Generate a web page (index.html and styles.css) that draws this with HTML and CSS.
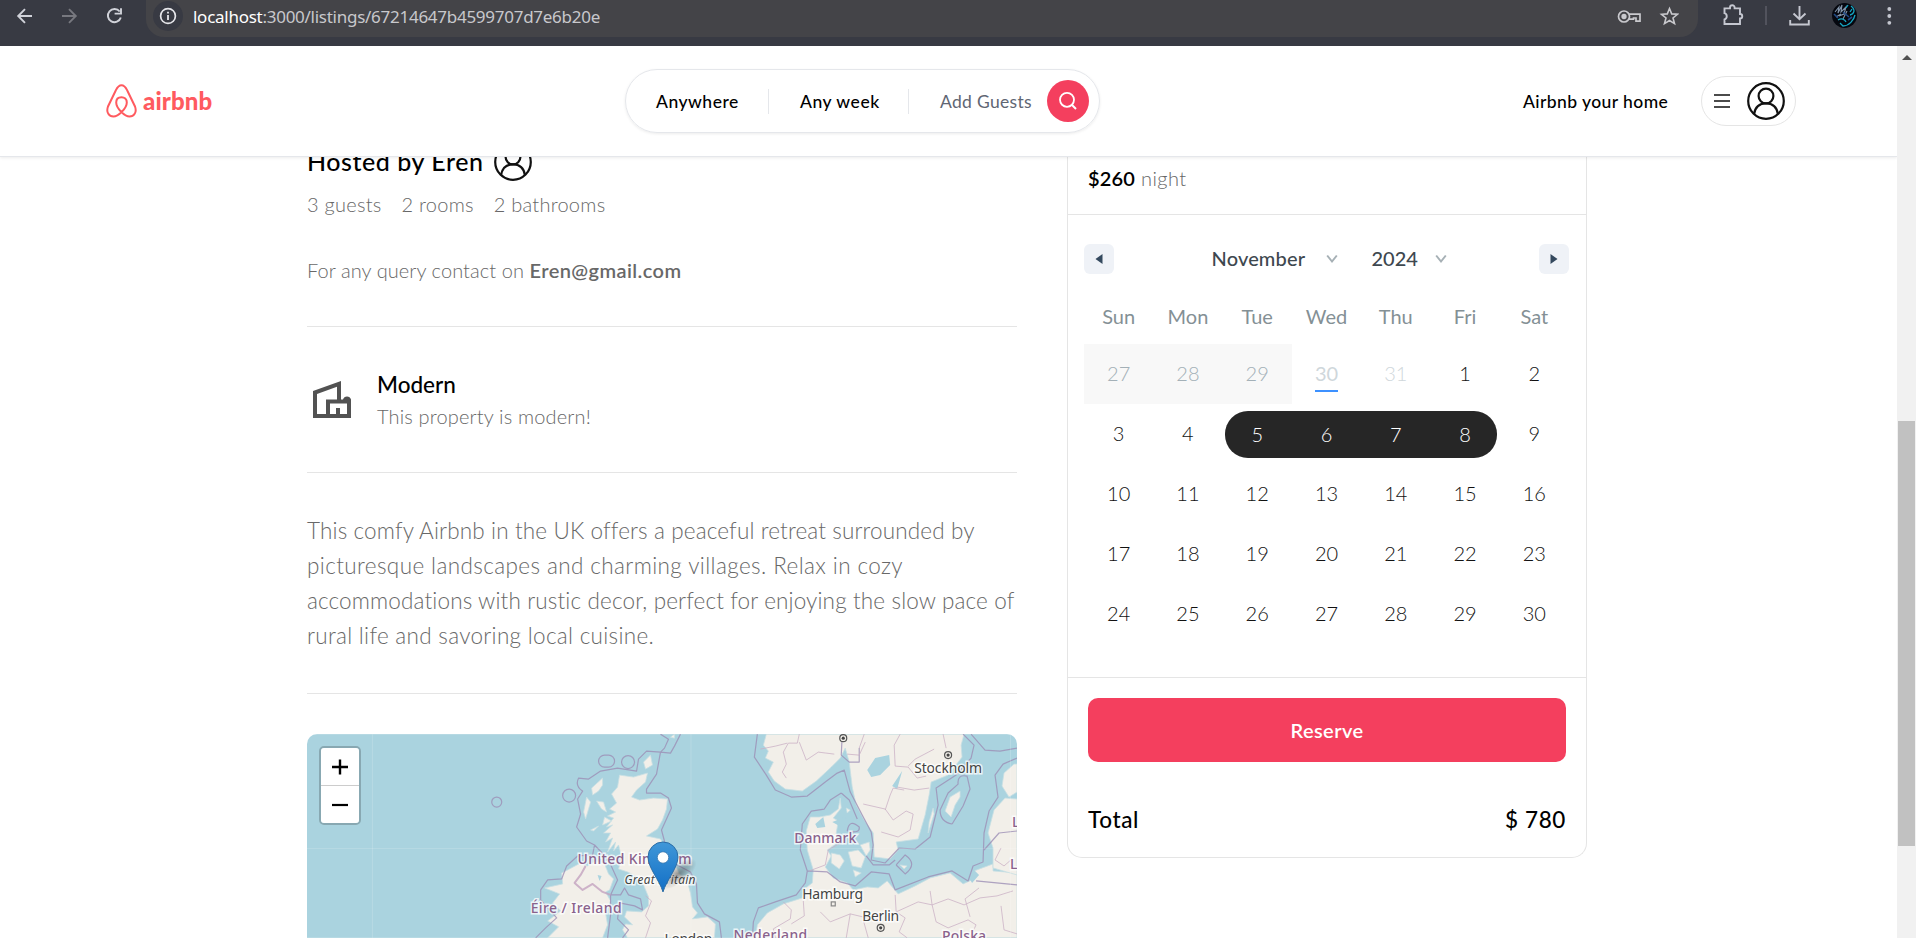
FILE: index.html
```html
<!DOCTYPE html>
<html lang="en">
<head>
<meta charset="utf-8">
<title>Airbnb</title>
<link rel="stylesheet" href="styles.css">
</head>
<body>
<svg class="defs" width="0" height="0">
  <symbol id="avatar" viewBox="0 0 38 38"><g fill="none" stroke="#111" stroke-width="2.2"><circle cx="19" cy="19" r="17.8"/><circle cx="19" cy="14" r="7.4"/><path d="M7 32.2C8.200 25 13 21.400 19 21.400S29.800 25 31 32.200"/></g></symbol>
  <symbol id="chev" viewBox="0 0 12 10"><path d="M1.200 1.500L6 7.500L10.800 1.500" fill="none" stroke="#a6b0b5" stroke-width="2"/></symbol>
</svg>
<div class="browser">
  <svg class="nav-icons" width="146" height="46" viewBox="0 0 146 46" fill="none" stroke="#d0d2d9" stroke-width="1.900">
    <path d="M32 16H18.500M25 9.200L18.200 16L25 22.800"/>
    <path d="M62 16H75.500M69 9.200L75.800 16L69 22.800" stroke="#77787f"/>
    <path d="M119.700 11.500A6.600 6.600 0 1 0 120.800 17.500M121 8.200V13.600H114.600"/>
  </svg>
  <div class="omnibox">
    <span class="info"><svg width="18" height="18" viewBox="0 0 18 18"><circle cx="9" cy="9" r="7.400" fill="none" stroke="#e6e6ea" stroke-width="1.700"/><path d="M9 8v5M9 4.800v1.800" stroke="#e6e6ea" stroke-width="1.800"/></svg></span>
    <span class="url"><b>localhost</b>:3000/listings/67214647b4599707d7e6b20e</span>
    <svg class="omni-icons" width="64" height="22" viewBox="1616 5 64 22" fill="none" stroke="#c9c9cd" stroke-width="1.700">
      <circle cx="1625" cy="16.500" r="5.500"/><circle cx="1625" cy="16.500" r="1.800" fill="#c9c9cd"/><path d="M1630 14.200H1641V21.200H1637V18H1634.500V19.200H1629.500"/>
      <path d="M1670.500 8.500L1672.700 13.900L1678.500 14.300L1674 18L1675.500 23.600L1670.500 20.500L1665.500 23.600L1667 18L1662.500 14.300L1668.300 13.900Z" stroke-width="1.600"/>
    </svg>
  </div>
  <svg class="tool-icons" width="200" height="46" viewBox="1716 0 200 46" fill="none" stroke="#c5c7d0" stroke-width="1.900">
    <path d="M1724.500 8.400H1730V7.500A2.300 2.300 0 0 1 1734.600 7.500V8.400H1740V14A2.200 2.200 0 0 1 1740 18.500V24H1724.500V19.500C1727.500 18.500 1727.500 14 1724.500 13.200Z"/>
    <path d="M1766 6V25" stroke="#5b5d66" stroke-width="1.500"/>
    <path d="M1799.500 6V19M1793.500 13.500L1799.500 19.300L1805.500 13.500M1790.200 20V24.500H1808.800V20"/>
    <circle cx="1844.500" cy="15.500" r="12.500" fill="#05070f" stroke="none"/>
    <path d="M1835 12L1839 7L1838 13L1842 5L1841 12L1846 7L1844 14L1839 16M1843 19L1847 11M1836 17L1841 14" stroke="#8294aa" stroke-width="1.100"/>
    <path d="M1851 6C1856 10 1854 14 1850 15M1855 15C1854 20 1849 26 1843 26L1840 23M1852 9L1850 12M1838 20C1841 18 1845 19 1846 22M1848 5L1846 8" stroke="#16a6c3" stroke-width="1.300"/>
    <path d="M1843 12L1849 17M1838 18L1834 14M1848 20L1852 17" stroke="#214a86" stroke-width="1.600"/>
    <g fill="#c5c7d0" stroke="none"><circle cx="1889.300" cy="9" r="1.900"/><circle cx="1889.300" cy="16" r="1.900"/><circle cx="1889.300" cy="22.800" r="1.900"/></g>
  </svg>
</div>
<div class="window">
  <div class="page">
    <header class="header">
      <div class="logo">
        <svg width="31" height="34" viewBox="0 0 31 34"><path d="M15.500 1.200C12 1.200 11 4 9.500 7L2 22.500C-.2 28.500 3.200 32.600 7.500 32.600C12 32.600 20.800 24.500 20.800 18.500C20.800 15 18.500 13.200 15.500 13.200C12.500 13.200 10.200 15 10.200 18.500C10.200 24.500 19 32.600 23.500 32.600C27.800 32.600 31.200 28.500 29 22.500L21.500 7C20 4 19 1.200 15.500 1.200Z" fill="none" stroke="#ff5a5f" stroke-width="2"/></svg>
        <span class="logo-text">airbnb</span>
      </div>
      <div class="search">
        <div class="seg seg-1">Anywhere</div>
        <div class="seg seg-2">Any week</div>
        <div class="seg seg-3">Add Guests</div>
        <div class="search-btn"><svg width="20" height="20" viewBox="0 0 20 20"><circle cx="9" cy="8.800" r="7" fill="none" stroke="#fff" stroke-width="1.800"/><path d="M13.800 13.800L18 18" stroke="#fff" stroke-width="2"/></svg></div>
      </div>
      <div class="home">Airbnb your home</div>
      <div class="user">
        <svg width="16" height="16" viewBox="0 0 16 16"><path d="M0 2H16M0 8H16M0 14H16" stroke="#111" stroke-width="1.700"/></svg>
        <svg width="38" height="38"><use href="#avatar"/></svg>
      </div>
    </header>
    <main class="main">
      <section class="details">
        <div class="host"><span>Hosted by Eren</span><svg width="38" height="38"><use href="#avatar"/></svg></div>
        <div class="facts"><span>3 guests</span><span>2 rooms</span><span>2 bathrooms</span></div>
        <div class="contact">For any query contact on <b>Eren@gmail.com</b></div>
        <hr class="rule">
        <div class="category">
          <svg width="50" height="50" viewBox="0 0 50 50" fill="#525252"><path fill-rule="evenodd" d="M6 16L34 6V24.500H36A4.200 4.200 0 0 1 44 24.500V43H6ZM10 19V39H19V24.500H30V11.800ZM23 28.500V39H29V33H33V39H40V28.500Z"/></svg>
          <div>
            <div class="cat-name">Modern</div>
            <div class="cat-desc">This property is modern!</div>
          </div>
        </div>
        <hr class="rule">
        <p class="description">This comfy Airbnb in the UK offers a peaceful retreat surrounded by<br><span class="loose">picturesque landscapes and charming villages. Relax in cozy</span><br>accommodations with rustic decor, perfect for enjoying the slow pace of<br><span class="loose">rural life and savoring local cuisine.</span></p>
        <hr class="rule">
        <div class="map">
          <svg class="map-art" width="711" height="204" viewBox="306 734 711 204">
            <defs><linearGradient id="pin" x1="0" y1="0" x2="0" y2="1"><stop offset="0" stop-color="#4097d8"/><stop offset="1" stop-color="#126fc6"/></linearGradient>
            <radialGradient id="shade"><stop offset="0" stop-color="#333" stop-opacity=".5"/><stop offset="1" stop-color="#333" stop-opacity="0"/></radialGradient></defs>
            <rect x="306" y="734" width="711" height="204" fill="#aad3df"/>
            <g class="land">
              <path d="M619 775L633 777L647 773L645 782L636 790L631 797L639 800L653 798L667 799L666 809L662 820L657 829L646 836L660 839L666 850L673 861L679 874L687 882L690 893L692 907L697 913L692 919L707 917L715 924L714 938H627L622 930L625 924L632 925L624 917L626 911L641 912L648 906L648 897L643 885L635 876L627 872L618 869L621 857L618 845L613 851L615 842L607 852L612 838L605 842L610 833L603 833L612 825L606 827L613 818L607 816L615 812L609 809L616 803L611 794L617 787Z"/>
              <path d="M591 788L602 778L602 785L598 791L592 795ZM596 801L603 802L606 812L601 809ZM586 797L590 802L585 819L583 812ZM643 762L650 755L652 765L645 769ZM604 817L611 821L602 825ZM590 830L598 826L593 831ZM670 737L674 734V738Z"/>
              <path d="M567 870L580 863L587 866L595 861L604 864L608 874L613 879L609 890L605 892L610 901L605 913L607 925L602 938H547L558 927L547 921L560 911L552 903L559 894L544 888L562 884L561 873Z"/>
              <path d="M766 734L763 745L768 751L765 758L773 762L768 772L774 781L785 789L802 791L816 781L831 767L840 758L845 748L849 762L852 787L856 805L864 820L873 833L874 857L890 859L898 850L896 842L918 839L925 815L929 795L931 782L948 775L962 757L961 745L964 734Z"/>
              <path d="M840 798L838 809L830 815L819 817L810 817L806 831L807 850L813 870L812 883L804 889L802 898L783 904L767 913L757 925L755 938H1017V873L993 871L993 864L974 871L974 879L963 884L950 873L930 878L915 886L898 894L887 881L878 888L867 887L853 890L847 883L833 878L825 867L831 856L827 850L838 842L836 833L838 821L833 818L841 808Z"/>
              <path d="M831 853L840 855L844 861L839 869L831 863ZM848 852L858 850L865 857L861 868L852 866ZM860 845L869 842L870 850L866 856ZM853 870L861 873L855 877ZM945 811L950 797L960 791L960 797L955 805L951 817ZM1002 786L1004 773L1014 764H1017V792L1009 797ZM900 865L907 866L904 869ZM929 822L933 808L934 814L928 833ZM846 808L850 810L847 813Z"/>
              <path d="M1017 799L1005 798L994 810L988 833L993 848L993 868L1017 875Z"/>
            </g>
            <path class="water" d="M867 770L875 758L889 755L890 765L880 775L871 777ZM892 786L902 771L897 789ZM597 875L601 876L599 881ZM832 822L845 817L848 822L841 827ZM815 824L823 817L825 827L817 828ZM968 876L973 869L979 875L972 883Z"/>
            <g class="border">
              <path d="M660 734L668 739L664 748L660 752L646 751L638 759L636 771L617 768L600 771L588 779L578 778Q574 786 582 791L577 799L580 814L576 827L586 841L594 845L592 855L577 856L566 866L561 879L547 880L540 890L540 900L556 918L545 928L535 938M680 734L674 746L670 753L660 752M660 752L656 774L646 789L646 793L660 793L668 798L671 808L661 830L665 845L675 864L690 872L696 884L697 903L704 914L719 922L721 938M594 845L608 860L617 880L610 895L620 895L624 888L628 895L640 899L642 910L634 906L619 903L617 919L628 930L622 938M610 895L610 915L607 938"/>
              <path class="irish" d="M585 866L580 875L574 883L582 890L592 884L602 892L610 895"/>
              <rect x="598" y="755" width="16" height="12" rx="6"/><circle cx="627.500" cy="762" r="6.500"/><circle cx="568.500" cy="795.500" r="6.500"/><circle cx="496" cy="802" r="5"/>
              <path d="M757 734L754 757L766 775L775 790L791 797L807 796L825 782L837 773L844 770L850 792L862 815L871 832L873 845L871 860L885 863L899 848L915 849L930 837L938 805L936 788L956 775L971 758L974 745L963 734M971 734L985 750L1000 751L1017 748M841 793L830 800L824 809L811 811L802 824L800 850L807 871L805 883L796 895L775 902L758 908L753 922L752 938M807 871L827 872L840 882L855 886L871 872L889 874L895 890L928 877L952 871L968 881L973 866L983 862L984 833L989 811L998 797L995 775L1003 764L1017 758M866 856L873 865L889 865L895 860M841 793L849 800L857 819M952 824Q940 822 940 810L948 793L958 784Q957 774 967 776L970 789L963 806L952 824M984 850L999 833L1017 831M976 881L1017 885M847 831Q849 818 859 827Q860 834 847 831M896 865L905 855Q918 864 905 874L896 865M842 734L841 755L849 762L859 762L859 748"/>
            </g>
            <g class="region">
              <path d="M786 778L782 772L786 764L783 752L788 743L797 743L799 734M799 742L806 760L818 752L834 754M760 749L775 746L787 743M859 748L864 734M900 734L894 745L895 766L908 767L917 778L926 776M897 787L914 790L929 788M885 810L890 795L893 788L904 790M863 804L885 809L893 820L906 811L913 814L910 830L898 837L881 832M934 749L915 759L908 766M946 748L943 734M865 742L859 755L847 754M809 871L825 865L828 850L840 843M783 902L791 910L790 919L773 929L775 938M803 901L804 916L791 924M895 895L896 912L905 918L899 932L907 938M896 912L918 902L932 905L930 891M932 905L948 899L964 905L980 898L997 896L1013 891M932 905L936 922L948 928L968 920L976 925L970 938M970 917L965 899L979 888M820 912L830 922L850 914L875 920L889 910M850 914L846 938M868 938L863 920M1001 906L1004 930L1017 934M645 896L651 901L645 916L650 923L645 938M1001 848L995 860L1004 866L1012 859"/>
            </g>
            <path d="M306 848.500H1017M371.500 734V938M690.500 734V938M1010.500 734V938" stroke="#fff" stroke-opacity=".16"/>
            <g class="country">
              <text x="577" y="864" textLength="114">United Kingdom</text><text x="530" y="913" textLength="91">Éire / Ireland</text><text x="794" y="843" textLength="62">Danmark</text><text x="733" y="940" textLength="74">Nederland</text><text x="942" y="941" textLength="44">Polska</text><text x="1012" y="827">Latvija</text><text x="1010" y="869">Lietuva</text>
            </g>
            <g class="city">
              <text x="914" y="773" textLength="68">Stockholm</text><text x="802" y="899" textLength="61">Hamburg</text><text x="862" y="921" textLength="37">Berlin</text><text x="664" y="944" textLength="48">London</text><text class="gb" x="624" y="884" textLength="71">Great Britain</text>
            </g>
            <g fill="#f2efe9" stroke="#555" stroke-width="1.200"><circle cx="843" cy="738" r="3.500"/><circle cx="948" cy="755" r="3.500"/><circle cx="880.500" cy="928" r="3.500"/><rect x="831" y="902" width="4" height="4" stroke="#888"/></g>
            <g fill="#444"><circle cx="843" cy="738" r="1.600"/><circle cx="948" cy="755" r="1.600"/><circle cx="880.500" cy="928" r="1.600"/></g>
            <ellipse cx="678" cy="874" rx="22" ry="9" fill="url(#shade)" transform="rotate(-38 678 874)"/>
            <path d="M662.500 892C659 880 647.500 868 647.500 857A15 15 0 0 1 677.500 857C677.500 868 666 880 662.500 892Z" fill="url(#pin)" stroke="#2b6ca6"/>
            <circle cx="662.500" cy="857.500" r="5.700" fill="#fff" stroke="#2b6ca6" stroke-width=".7"/>
          </svg>
          <div class="zoom"><div class="zoom-btn"><svg width="16" height="16" viewBox="0 0 16 16"><path d="M0 8H16M8 .5V15.500" stroke="#000" stroke-width="2.400"/></svg></div><div class="zoom-btn"><svg width="16" height="16" viewBox="0 0 16 16"><path d="M0 8H16" stroke="#000" stroke-width="2.200"/></svg></div></div>
        </div>
      </section>
      <aside class="card">
        <div class="price"><b>$260</b><span>night</span></div>
        <div class="calendar">
          <div class="cal-head">
            <div class="arrow"><svg width="8" height="10" viewBox="0 0 8 10"><path d="M7.500 0V10L.5 5Z" fill="#34495e"/></svg></div>
            <div class="pickers">
              <span class="month">November</span><svg width="12" height="10"><use href="#chev"/></svg>
              <span class="year">2024</span><svg width="12" height="10"><use href="#chev"/></svg>
            </div>
            <div class="arrow"><svg width="8" height="10" viewBox="0 0 8 10"><path d="M.5 0V10L7.500 5Z" fill="#34495e"/></svg></div>
          </div>
          <div class="week names"><span>Sun</span><span>Mon</span><span>Tue</span><span>Wed</span><span>Thu</span><span>Fri</span><span>Sat</span></div>
          <div class="week"><span class="past">27</span><span class="past">28</span><span class="past">29</span><span class="dim today">30</span><span class="dim">31</span><span>1</span><span>2</span></div>
          <div class="week"><span>3</span><span>4</span><span class="sel first">5</span><span class="sel">6</span><span class="sel">7</span><span class="sel last">8</span><span>9</span></div>
          <div class="week"><span>10</span><span>11</span><span>12</span><span>13</span><span>14</span><span>15</span><span>16</span></div>
          <div class="week"><span>17</span><span>18</span><span>19</span><span>20</span><span>21</span><span>22</span><span>23</span></div>
          <div class="week"><span>24</span><span>25</span><span>26</span><span>27</span><span>28</span><span>29</span><span>30</span></div>
        </div>
        <div class="reserve-box"><div class="reserve">Reserve</div></div>
        <div class="total"><span>Total</span><span>$ 780</span></div>
      </aside>
    </main>
  </div>
  <div class="scrollbar"><div class="up"></div><div class="thumb"></div></div>
</div>
</body>
</html>
```
FILE: styles.css
```css
* { box-sizing: border-box; }
body { margin: 0; width: 1916px; height: 938px; overflow: hidden; background: #fff; color: #000; font-family: Lato, "Open Sans", sans-serif; display: flex; flex-direction: column; }
b { font-weight: 600; }
svg { flex: none; }
.defs { position: absolute; }
.browser { height: 46px; flex: none; background: #383a43; display: flex; }
.omnibox { width: 1552px; height: 37px; background: #444448; border-radius: 0 0 18px 18px; display: flex; align-items: center; padding: 0 19px 5px 7px; }
.info { width: 30px; height: 30px; border-radius: 50%; background: #383a43; display: flex; align-items: center; justify-content: center; }
.url { font: 17px "Noto Sans", sans-serif; letter-spacing: -.266px; color: #c8c8cc; margin-left: 10px; white-space: nowrap; }
.url b { font-weight: 400; color: #fff; }
.omni-icons { margin-left: auto; }
.tool-icons { margin-left: auto; }
.window { flex: 1; display: flex; min-height: 0; }
.page { width: 1897px; overflow: hidden; }
.header { position: relative; z-index: 2; height: 111px; background: #fff; border-bottom: 1px solid #e5e7eb; box-shadow: 0 1px 3px rgba(0,0,0,.08); display: flex; align-items: center; padding-left: 106px; font-size: 17.5px; font-weight: 500; letter-spacing: .42px; }
.logo { width: 107px; margin-right: 412px; display: flex; align-items: center; flex: none; }
.logo-text { margin-left: 6px; color: #ff5a5f; font-size: 24px; font-weight: 900; line-height: 28px; letter-spacing: .1px; padding-bottom: 1px; }
.search { width: 475px; height: 64px; flex: none; border: 1px solid #e5e7eb; border-radius: 32px; box-shadow: 0 1px 3px rgba(0,0,0,.08); display: flex; align-items: center; white-space: nowrap; }
.seg { height: 25px; line-height: 25px; padding-left: 30px; }
.seg-1 { width: 143px; border-right: 1px solid #e5e7eb; letter-spacing: .5px; }
.seg-2 { width: 140px; padding-left: 31px; border-right: 1px solid #e5e7eb; letter-spacing: .55px; }
.seg-3 { width: 138px; padding-left: 31px; color: #5f6673; font-weight: 400; letter-spacing: .32px; }
.search-btn { width: 42px; height: 42px; border-radius: 50%; background: #f43f5e; display: flex; align-items: center; justify-content: center; }
.home { margin-left: 423px; width: 178px; white-space: nowrap; }
.user { width: 95px; height: 50px; border: 1px solid #e5e5e5; border-radius: 25px; display: flex; align-items: center; padding: 0 10px 0 12px; justify-content: space-between; }
.main { margin-top: -14px; padding-left: 307px; display: flex; gap: 50px; align-items: flex-start; }
.details { width: 710px; color: #686868; font-size: 20px; font-weight: 300; }
.host { height: 38px; display: flex; align-items: center; gap: 10px; color: #000; font-size: 25px; font-weight: 500; letter-spacing: .55px; }
.host span { padding-bottom: 3px; }
.facts { margin-top: 9px; line-height: 29px; padding-bottom: 1px; display: flex; gap: 20px; letter-spacing: .25px; }
.contact { margin-top: 35px; line-height: 30px; letter-spacing: .072px; }
.contact b { letter-spacing: .42px; }
.rule { border: 0; height: 1px; background: #e5e5e5; margin: 40px 0; }
.contact + .rule { margin-top: 41px; }
.category { display: flex; align-items: center; gap: 20px; height: 65px; }
.cat-name { line-height: 35px; font-size: 22.5px; font-weight: 500; color: #000; }
.cat-desc { line-height: 28px; padding-bottom: 2px; letter-spacing: .163px; }
.description { margin: 0; font-size: 22.5px; line-height: 35px; white-space: nowrap; letter-spacing: .14px; }
.loose { letter-spacing: .3px; }
.description .loose:first-of-type { letter-spacing: .394px; }
.map { position: relative; height: 204px; border-radius: 10px 10px 0 0; overflow: hidden; }
.map-art { display: block; width: 710px; }
.land path { fill: #f2efe9; stroke: #c9e0e3; stroke-width: .8; }
.water { fill: #aad3df; }
.border * { fill: none; stroke: #9c8fb5; stroke-width: 1.200; stroke-opacity: .8; stroke-linejoin: round; }
.border .irish { stroke: #c3a3bf; stroke-width: 2; }
.region path { fill: none; stroke: #c9aec4; stroke-width: 1; stroke-opacity: .75; }
.country text, .city text { font-family: "Noto Sans", sans-serif; font-size: 14px; font-weight: 400; paint-order: stroke; stroke: rgba(255,255,255,.75); stroke-width: 3px; }
.country text { fill: #8a628c; font-weight: 500; }
.city text { fill: #444; }
.city .gb { font-style: italic; font-size: 12px; }
.zoom { position: absolute; left: 12px; top: 12px; width: 42px; height: 79px; border: 2px solid rgba(0,0,0,.2); border-radius: 5px; background-clip: padding-box; }
.zoom-btn { height: 37px; background: #fff; display: flex; align-items: center; justify-content: center; border-radius: 0 0 3px 3px; }
.zoom-btn:first-child { height: 38px; border-bottom: 1px solid #ccc; border-radius: 3px 3px 0 0; }
.card { width: 520px; height: 715px; border: 1px solid #e5e5e5; border-top: 0; border-radius: 0 0 15px 15px; font-size: 20px; }
.price { height: 72px; border-bottom: 1px solid #e5e5e5; display: flex; align-items: center; gap: 6px; padding: 0 0 2px 20px; color: #666; font-weight: 300; letter-spacing: .45px; }
.price b { color: #000; letter-spacing: .15px; }
.calendar { height: 463px; border-bottom: 1px solid #e5e5e5; padding: 29px 17px 0 16px; }
.cal-head { display: flex; justify-content: space-between; align-items: center; height: 30px; }
.arrow { width: 30px; height: 30px; border-radius: 6px; background: #eff2f7; display: flex; align-items: center; justify-content: center; }
.pickers { display: flex; align-items: center; font-weight: 500; color: #3e484f; padding-left: 5px; }
.month { width: 114px; padding-bottom: 2px; letter-spacing: .15px; }
.year { width: 63px; margin-left: 34px; padding-bottom: 2px; }
.week { display: grid; grid-template-columns: repeat(7, 1fr); height: 60px; font-weight: 300; color: #111; }
.week span { display: flex; align-items: center; justify-content: center; padding-bottom: 2px; }
.names { height: 56px; margin-top: 14px; color: #849095; font-weight: 400; }
.names span { padding-bottom: 0; }
.week .past { background: #f8f8f8; color: #a3b0b7; }
.week .dim { color: #cfd7db; }
.today { position: relative; font-weight: 400; }
.today::after { content: ""; position: absolute; left: 23px; bottom: 12px; width: 23px; height: 2px; background: #3d91ff; }
.week .sel { background: #262626; color: #fff; margin: 7px 0 6px; }
.week .first { border-radius: 23px 0 0 23px; margin-left: 2px; padding-right: 2px; }
.week .last { border-radius: 0 23px 23px 0; margin-right: 3px; padding-left: 3px; }
.reserve-box { padding: 20px 20px 0; }
.reserve { height: 64px; border-radius: 10px; background: #f43f5e; color: #fff; font-weight: 600; letter-spacing: .4px; display: flex; align-items: center; justify-content: center; padding-bottom: 1px; }
.total { height: 95px; padding: 20px 20px 0 20px; display: flex; align-items: center; justify-content: space-between; font-size: 22.5px; font-weight: 500; letter-spacing: .6px; }
.scrollbar { width: 19px; background: #f1f1f1; position: relative; }
.up { margin: 9px auto 0; width: 0; border: 5px solid transparent; border-top: 0; border-bottom: 5px solid #505050; }
.thumb { position: absolute; left: 1px; top: 375px; width: 17px; height: 425px; background: #c1c1c1; }
```
